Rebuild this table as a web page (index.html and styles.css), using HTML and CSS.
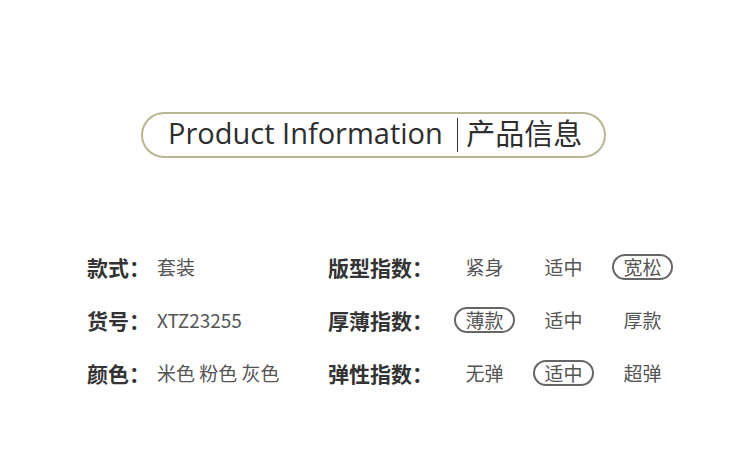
FILE: index.html
```html
<!DOCTYPE html>
<html lang="zh">
<head>
<meta charset="utf-8">
<link rel="stylesheet" href="styles.css">
</head>
<body>
<div class="page">
  <div class="head">
    <div class="pill-title"><span class="en">Product Information</span><span class="bar"></span><span class="cn">产品信息</span></div>
  </div>
  <div class="info">
    <div class="row">
      <div class="left"><span class="label">款式：</span><span class="val">套装</span></div>
      <div class="right"><span class="label rl">版型指数：</span><span class="opt">紧身</span><span class="opt">适中</span><span class="opt"><span class="sel">宽松</span></span></div>
    </div>
    <div class="row">
      <div class="left"><span class="label">货号：</span><span class="val">XTZ23255</span></div>
      <div class="right"><span class="label rl">厚薄指数：</span><span class="opt"><span class="sel">薄款</span></span><span class="opt">适中</span><span class="opt">厚款</span></div>
    </div>
    <div class="row">
      <div class="left"><span class="label">颜色：</span><span class="val">米色 粉色 灰色</span></div>
      <div class="right"><span class="label rl">弹性指数：</span><span class="opt">无弹</span><span class="opt"><span class="sel">适中</span></span><span class="opt">超弹</span></div>
    </div>
  </div>
</div>
</body>
</html>
```
FILE: styles.css
```css
html, body {
  margin: 0;
  padding: 0;
  background: #ffffff;
}
.page {
  width: 750px;
  height: 467px;
  font-family: "Noto Sans CJK SC", "Noto Sans", sans-serif;
  color: #333;
}
.head {
  padding-top: 112px;
  display: flex;
  justify-content: center;
}
.pill-title {
  box-sizing: border-box;
  width: 465px;
  height: 46px;
  margin-left: -3px;
  border: 2px solid #b8b693;
  border-radius: 23px;
  display: flex;
  align-items: center;
  padding-left: 25px;
  padding-bottom: 6px;
}
.en {
  font-family: "Open Sans", "Noto Sans", sans-serif;
  font-size: 29px;
  color: #2e2e2e;
}
.bar {
  width: 1.5px;
  height: 34px;
  background: #333;
  margin: 6px 8px 0 14px;
}
.cn {
  font-size: 29px;
  color: #2e2e2e;
}
.info {
  padding-top: 82px;
  padding-left: 87px;
}
.row {
  display: flex;
  align-items: center;
  height: 53px;
}
.left {
  width: 241px;
  display: flex;
  align-items: center;
}
.right {
  display: flex;
  align-items: center;
}
.label {
  font-size: 21px;
  font-weight: 700;
  color: #333;
  width: 70px;
}
.rl {
  width: 117px;
}
.val {
  font-size: 19px;
  color: #555;
}
.opt {
  width: 79px;
  display: flex;
  justify-content: center;
  font-size: 19px;
  color: #555;
}
.sel {
  border: 2px solid #666;
  border-radius: 13px;
  padding: 0 9px;
  line-height: 22px;
}
```
